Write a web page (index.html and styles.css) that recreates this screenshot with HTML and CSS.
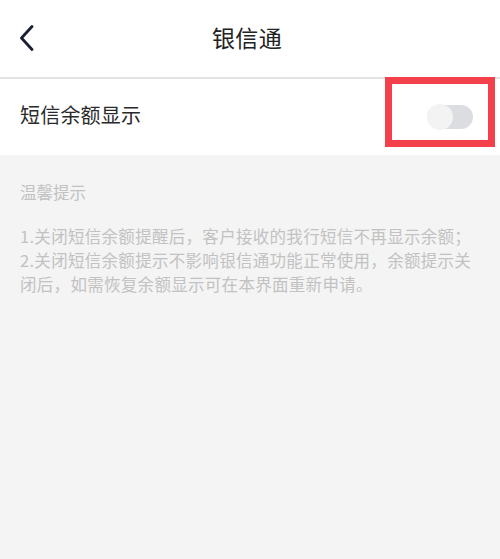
FILE: index.html
```html
<!DOCTYPE html>
<html lang="zh-CN">
<head>
<meta charset="utf-8">
<link rel="stylesheet" href="styles.css">
</head>
<body>
<div class="page">
  <header class="nav">
    <span class="back">
      <svg width="16" height="26" viewBox="0 0 16 26"><path d="M13 1.5 L2.5 13 L13 24.5" fill="none" stroke="#1b1f33" stroke-width="2.8" stroke-linecap="round" stroke-linejoin="round"/></svg>
    </span>
    <h1 class="title">银信通</h1>
  </header>
  <div class="row">
    <span class="label">短信余额显示</span>
    <span class="switch"><span class="knob"></span></span>
  </div>
  <section class="tips">
    <div class="tips-title">温馨提示</div>
    <p class="tips-text">1.关闭短信余额提醒后，客户接收的我行短信不再显示余额；</p>
    <p class="tips-text">2.关闭短信余额提示不影响银信通功能正常使用，余额提示关闭后，如需恢复余额显示可在本界面重新申请。</p>
  </section>
  <div class="highlight"></div>
</div>
</body>
</html>
```
FILE: styles.css
```css
html, body {
  margin: 0;
  padding: 0;
  background: #f4f4f4;
  font-family: "Noto Sans CJK SC", "Noto Sans", sans-serif;
}
.page {
  position: relative;
  width: 500px;
  height: 559px;
  overflow: hidden;
}
.nav {
  height: 77px;
  background: #fff;
  border-bottom: 2px solid #e2e2e2;
  display: flex;
  align-items: center;
  justify-content: center;
  position: relative;
}
.back {
  position: absolute;
  left: 19px;
  top: 25px;
  display: flex;
}
.title {
  margin: 0 0 4px 0;
  font-size: 23px;
  line-height: 30px;
  font-weight: 400;
  color: #222;
  letter-spacing: 0.3px;
  padding-right: 6px;
}
.row {
  height: 76px;
  background: #fff;
  display: flex;
  align-items: center;
  justify-content: space-between;
  padding: 0 27px 0 20px;
}
.label {
  font-size: 20px;
  line-height: 26px;
  margin-bottom: 4px;
  color: #2a2a2a;
  letter-spacing: 0.2px;
}
.switch {
  width: 46px;
  height: 24px;
  border-radius: 12px;
  background: #dcdde1;
  display: flex;
  align-items: center;
  margin-top: -1px;
}
.knob {
  width: 26px;
  height: 26px;
  border-radius: 50%;
  background: #f3f3f4;
}
.tips {
  padding: 25px 20px 0 20px;
  color: #c2c2c2;
}
.tips-title {
  font-size: 16.5px;
  line-height: 24px;
  margin-bottom: 20px;
}
.tips-text {
  margin: 0;
  font-size: 16.5px;
  line-height: 24px;
  letter-spacing: 0.3px;
  padding-right: 4px;
}
.highlight {
  position: absolute;
  left: 385px;
  top: 77px;
  width: 96px;
  height: 56px;
  border: 7px solid #f2414a;
}
```
